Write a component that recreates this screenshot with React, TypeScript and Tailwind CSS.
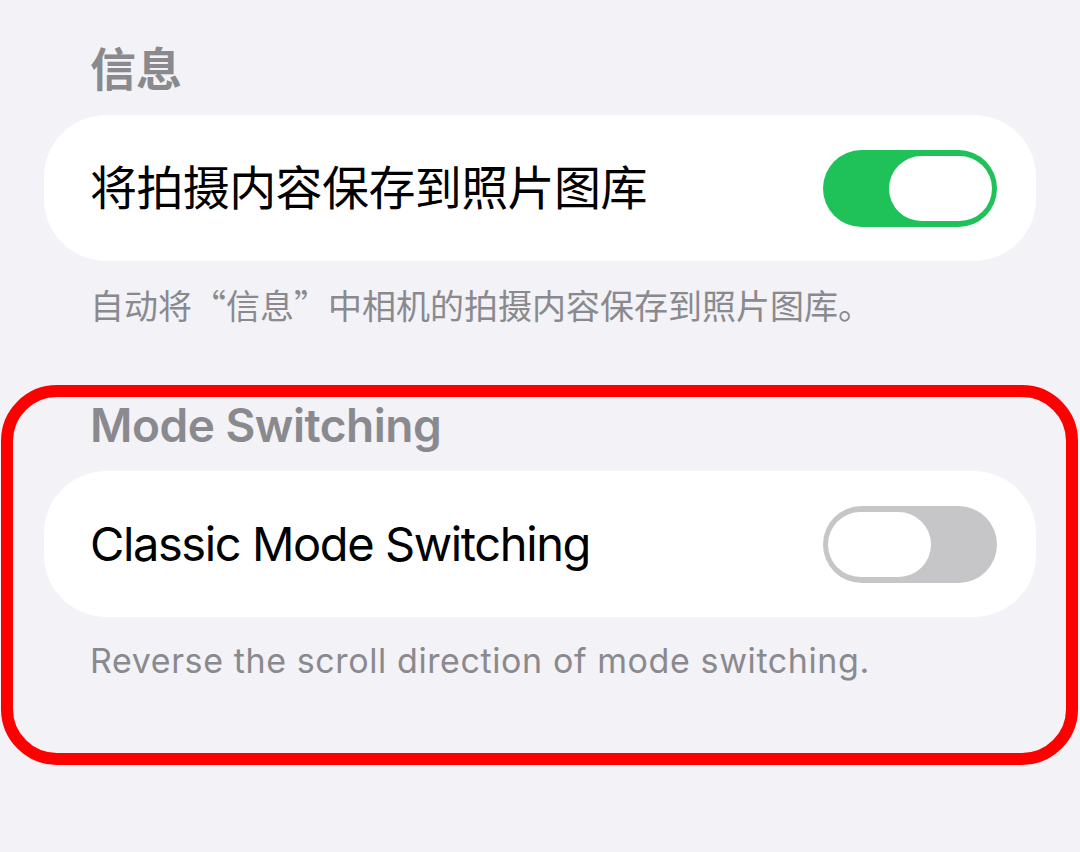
import React, { useState } from 'react';

const FONT = 'font-["Inter","Noto_Sans_CJK_SC",sans-serif]';

function Toggle({ on, onChange }: { on: boolean; onChange: () => void }) {
  return (
    <button
      onClick={onChange}
      className={`flex h-[77px] w-[174px] shrink-0 items-center rounded-full px-[5px] ${
        on ? 'justify-end bg-[#1fc258]' : 'justify-start bg-[#c6c6c8]'
      }`}
    >
      <span className="block h-[65px] w-[103px] rounded-full bg-white" />
    </button>
  );
}

function SettingRow({
  label,
  on,
  onChange,
  labelClass,
}: {
  label: string;
  on: boolean;
  onChange: () => void;
  labelClass: string;
}) {
  return (
    <div className="flex h-[146px] items-center justify-between rounded-[62px] bg-white pl-[46px] pr-[39px]">
      <span className={`text-[47px] leading-[56px] text-black ${labelClass}`}>{label}</span>
      <Toggle on={on} onChange={onChange} />
    </div>
  );
}

export default function App() {
  const [saveToLibrary, setSaveToLibrary] = useState(true);
  const [classicMode, setClassicMode] = useState(false);

  return (
    <div lang="zh-CN" className={`min-h-[852px] w-full overflow-hidden bg-[#f2f2f7] ${FONT}`}>
      <div className="px-[44px] pt-[41px]">
        <h2 className="pl-[46px] text-[46px] font-semibold leading-[56px] text-[#8a8a8e]">信息</h2>
        <div className="mt-[18px]">
          <SettingRow
            label="将拍摄内容保存到照片图库"
            labelClass="tracking-[-0.6px]"
            on={saveToLibrary}
            onChange={() => setSaveToLibrary(v => !v)}
          />
        </div>
        <p className="mt-[22px] pl-[46px] font-['Noto_Sans_CJK_SC',sans-serif] text-[34px] leading-[44px] text-[#8a8a8e] [font-feature-settings:'fwid']">
          自动将“信息”中相机的拍摄内容保存到照片图库。
        </p>
      </div>

      <div className="relative mt-[70px] px-[44px]">
        {/* red annotation frame */}
        <div className="pointer-events-none absolute -top-[12px] -bottom-[82px] left-[1px] right-[2px] rounded-[56px] border-[12px] border-[#ff0000]" />
        <h2 className="pl-[46px] text-[46px] font-semibold leading-[56px] tracking-[-0.5px] text-[#8a8a8e]">
          Mode Switching
        </h2>
        <div className="mt-[18px]">
          <SettingRow
            label="Classic Mode Switching"
            labelClass="tracking-[-1.4px]"
            on={classicMode}
            onChange={() => setClassicMode(v => !v)}
          />
        </div>
        <p className="mt-[22px] pl-[46px] text-[34px] leading-[44px] tracking-[0.6px] text-[#8a8a8e]">
          Reverse the scroll direction of mode switching.
        </p>
      </div>
    </div>
  );
}
